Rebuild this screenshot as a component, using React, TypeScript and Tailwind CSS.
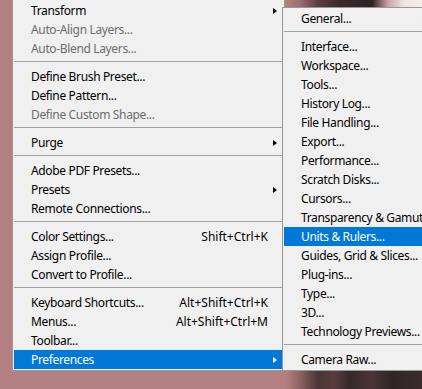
type Item =
  | { sep: true }
  | { sep?: false; label: string; shortcut?: string; sub?: boolean; disabled?: boolean; active?: boolean };

const editMenu: Item[] = [
  { label: "Transform", sub: true },
  { label: "Auto-Align Layers...", disabled: true },
  { label: "Auto-Blend Layers...", disabled: true },
  { sep: true },
  { label: "Define Brush Preset..." },
  { label: "Define Pattern..." },
  { label: "Define Custom Shape...", disabled: true },
  { sep: true },
  { label: "Purge", sub: true },
  { sep: true },
  { label: "Adobe PDF Presets..." },
  { label: "Presets", sub: true },
  { label: "Remote Connections..." },
  { sep: true },
  { label: "Color Settings...", shortcut: "Shift+Ctrl+K" },
  { label: "Assign Profile..." },
  { label: "Convert to Profile..." },
  { sep: true },
  { label: "Keyboard Shortcuts...", shortcut: "Alt+Shift+Ctrl+K" },
  { label: "Menus...", shortcut: "Alt+Shift+Ctrl+M" },
  { label: "Toolbar..." },
  { label: "Preferences", sub: true, active: true },
];

const prefsMenu: Item[] = [
  { label: "General...", shortcut: "Ctrl+K" },
  { sep: true },
  { label: "Interface..." },
  { label: "Workspace..." },
  { label: "Tools..." },
  { label: "History Log..." },
  { label: "File Handling..." },
  { label: "Export..." },
  { label: "Performance..." },
  { label: "Scratch Disks..." },
  { label: "Cursors..." },
  { label: "Transparency & Gamut..." },
  { label: "Units & Rulers...", active: true },
  { label: "Guides, Grid & Slices..." },
  { label: "Plug-ins..." },
  { label: "Type..." },
  { label: "3D..." },
  { label: "Technology Previews..." },
  { sep: true },
  { label: "Camera Raw..." },
];

function MenuRows({ items }: { items: Item[] }) {
  return (
    <>
      {items.map((item, i) =>
        item.sep ? (
          <div key={i} className="h-[9px] pt-[3px]">
            <div className="h-px bg-[#a0a0a0]" />
          </div>
        ) : (
          <div
            key={i}
            className={
              "flex h-[19px] items-center whitespace-nowrap pl-[17px] pr-[6px] pt-px leading-[18px] " +
              (item.active ? "bg-[#0078d7] text-white" : item.disabled ? "text-[#6d6d6d]" : "text-black")
            }
          >
            <span className="flex-1">{item.label}</span>
            {item.shortcut && <span className="tracking-normal">{item.shortcut}</span>}
            <span className="flex w-[9px] justify-end">
              {item.sub && (
                <span
                  className={
                    "h-0 w-0 border-y-[3.5px] border-l-[4px] border-y-transparent " +
                    (item.active ? "border-l-white" : "border-l-black")
                  }
                />
              )}
            </span>
          </div>
        )
      )}
    </>
  );
}

export default function App() {
  return (
    <div className="relative flex h-[389px] w-[422px] flex-col overflow-hidden bg-[#b38081] font-['Noto_Sans',sans-serif] text-[12px] tracking-[-0.35px]">
      {/* photo behind the menus */}
      <div className="h-[8px] bg-[linear-gradient(90deg,#b38081_0px,#b38081_286px,#9c6c70_300px,#5b3d40_318px,#3a2a2c_340px,#2e2224_372px,#c9a3a6_388px,#f1e3e3_404px,#f6eeee_422px)]" />
      <div className="flex-1" />
      <div className="h-[18px] bg-[linear-gradient(90deg,#b38081_0px,#b38081_286px,#8d6264_300px,#4a3436_318px,#5a3c3e_334px,#35292a_350px,#4b3537_372px,#2f2526_392px,#3b2c2d_422px)]" />

      {/* Edit menu */}
      <div className="absolute left-[12px] top-[-2px] w-[273px] border border-[#979797] bg-[#f0f0f0] px-px pb-px pt-[2px]">
        <MenuRows items={editMenu} />
      </div>

      {/* Preferences submenu */}
      <div className="absolute left-[282px] top-[7px] w-[191px] border border-[#979797] bg-[#f0f0f0] p-px">
        <MenuRows items={prefsMenu} />
      </div>
    </div>
  );
}
